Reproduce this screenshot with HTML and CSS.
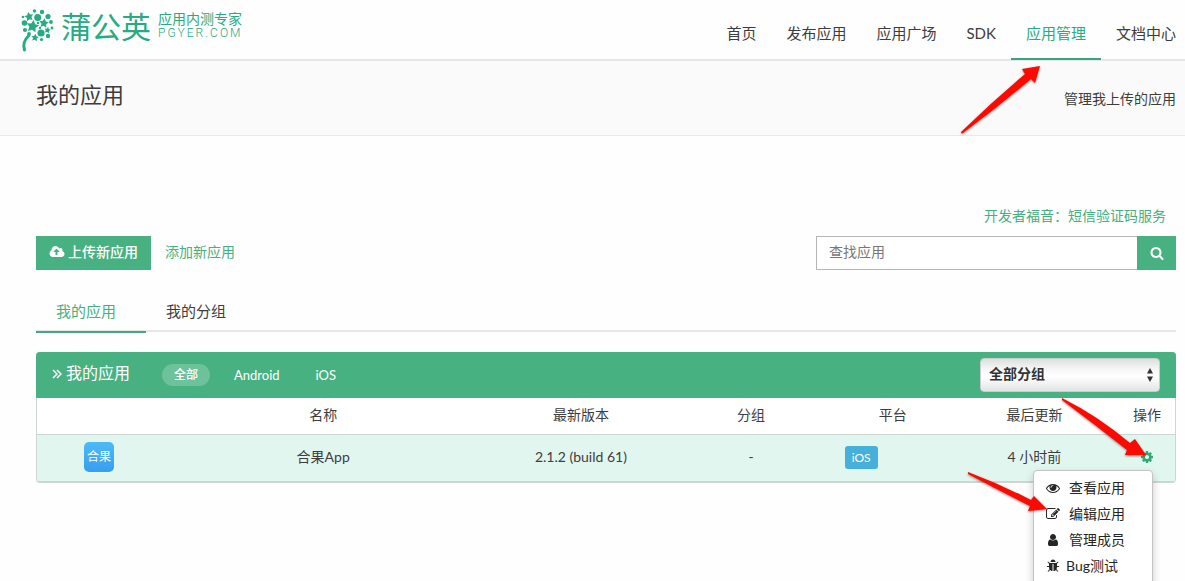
FILE: index.html
```html
<!DOCTYPE html>
<html lang="zh-CN">
<head>
<meta charset="utf-8">
<meta name="viewport" content="width=device-width, initial-scale=1">
<title>我的应用</title>
<link rel="stylesheet" href="styles.css">
</head>
<body>
<div class="page">
  <header class="site-header">
    <a class="brand" href="#">
      <svg class="brand-mark" viewBox="0 0 34 44" aria-hidden="true">
        <defs><path id="star" d="M0-5 1.600-1.800 5-1.400 2.500 1.100 3.100 4.600 0 3-3.100 4.600-2.500 1.100-5-1.400-1.600-1.800z"/></defs>
        <g fill="#27ab82">
          <use href="#star" transform="translate(12.700 18) rotate(10) scale(1.250)"/>
          <use href="#star" transform="translate(9 8.500) rotate(-12) scale(.9)"/>
          <use href="#star" transform="translate(24 15) rotate(8) scale(.95)"/>
          <use href="#star" transform="translate(15 29.500) rotate(8) scale(.75)"/>
          <use href="#star" transform="translate(27.500 22) rotate(12) scale(.65)"/>
          <circle cx="17.700" cy="9.500" r="3.500"/><circle cx="21" cy="25" r="3.600"/>
          <circle cx="28" cy="8.500" r="2.600"/><circle cx="4.500" cy="15" r="2.800"/>
          <circle cx="14.500" cy="3" r="1.700"/><circle cx="22" cy="4" r="2.200"/>
          <circle cx="5" cy="22" r="2.100"/><circle cx="9" cy="26" r="1.900"/>
          <circle cx="31" cy="14" r="1.900"/><circle cx="32" cy="20" r="1.400"/>
          <circle cx="28" cy="28" r="2.200"/>
          <circle cx="21.500" cy="31.500" r="1.600"/><circle cx="3" cy="9" r="1.300"/>
          <circle cx="18" cy="15" r="1.200"/><circle cx="20" cy="20" r="1.200"/>
        </g>
        <path d="M8.500 28Q2 34 4.500 42" fill="none" stroke="#27ab82" stroke-width="3" stroke-linecap="round"/>
      </svg>
      <span class="brand-name">蒲公英</span>
      <span class="brand-tag"><span>应用内测专家</span><span class="brand-domain">PGYER.COM</span></span>
    </a>
    <nav class="main-nav">
      <a href="#">首页</a>
      <a href="#">发布应用</a>
      <a href="#">应用广场</a>
      <a href="#">SDK</a>
      <a class="active" href="#">应用管理</a>
      <a href="#">文档中心</a>
    </nav>
  </header>

  <div class="title-band">
    <h1>我的应用</h1>
    <p>管理我上传的应用</p>
  </div>

  <main>
    <a class="promo" href="#">开发者福音：短信验证码服务</a>
    <div class="toolbar">
      <button class="upload" type="button">
        <svg class="cloud" viewBox="0 0 2048 1792" aria-hidden="true"><path d="M1344 864q0-14-9-23l-352-352q-9-9-23-9t-23 9l-351 351q-10 12-10 24 0 14 9 23t23 9h224v352q0 13 9.500 22.500t22.500 9.500h192q13 0 22.500-9.500t9.500-22.500v-352h224q13 0 22.500-9.500t9.500-22.500zm640 288q0 159-112.500 271.500t-271.500 112.500h-1088q-185 0-316.500-131.500t-131.500-316.500q0-130 70-240t188-165q-2-30-2-43 0-212 150-362t362-150q156 0 285.500 87t188.500 231q71-62 166-62 106 0 181 75t75 181q0 76-41 138 130 31 213.500 135.500t83.500 238.500z"/></svg>
        上传新应用
      </button>
      <a class="add-link" href="#">添加新应用</a>
      <form class="search" role="search">
        <input type="text" placeholder="查找应用" aria-label="查找应用">
        <button type="submit" aria-label="搜索">
          <svg viewBox="0 0 1792 1792" aria-hidden="true"><path d="M1216 832q0-185-131.500-316.500t-316.500-131.500-316.500 131.500-131.500 316.500 131.500 316.500 316.500 131.500 316.500-131.500 131.500-316.500zm512 832q0 52-38 90t-90 38q-54 0-90-38l-343-342q-179 124-399 124-143 0-273.500-55.500t-225-150-150-225-55.500-273.500 55.500-273.500 150-225 225-150 273.500-55.500 273.500 55.500 225 150 150 225 55.500 273.500q0 220-124 399l343 343q37 37 37 90z"/></svg>
        </button>
      </form>
    </div>

    <nav class="tabs">
      <a class="active" href="#">我的应用</a>
      <a href="#">我的分组</a>
    </nav>

    <section class="panel">
      <div class="panel-head">
        <svg class="chevrons" viewBox="0 0 10 10" aria-hidden="true"><path d="M1 1l4 4-4 4M5 1l4 4-4 4"/></svg>
        <h2>我的应用</h2>
        <div class="filters">
          <button class="selected" type="button">全部</button>
          <button type="button">Android</button>
          <button type="button">iOS</button>
        </div>
        <div class="group-select">
          <select aria-label="分组"><option>全部分组</option></select>
          <svg viewBox="0 0 6 14" aria-hidden="true"><path d="M0 5.500 3 0l3 5.500zM0 8.500h6L3 14z"/></svg>
        </div>
      </div>
      <table>
        <colgroup>
          <col class="col-icon"><col class="col-name"><col class="col-version"><col class="col-group"><col class="col-platform"><col class="col-updated"><col>
        </colgroup>
        <thead>
          <tr><th></th><th>名称</th><th>最新版本</th><th>分组</th><th>平台</th><th>最后更新</th><th class="actions">操作</th></tr>
        </thead>
        <tbody>
          <tr>
            <td><span class="app-icon">合果</span></td>
            <td>合果App</td>
            <td>2.1.2 (build 61)</td>
            <td>-</td>
            <td><span class="badge">iOS</span></td>
            <td>4 小时前</td>
            <td class="actions">
              <button class="gear" type="button" aria-label="操作">
                <svg viewBox="0 0 1792 1792" aria-hidden="true"><path d="M1152 896q0-106-75-181t-181-75-181 75-75 181 75 181 181 75 181-75 75-181zm512-109v222q0 12-8 23t-20 13l-185 28q-19 54-39 91 35 50 107 138 10 12 10 25t-9 23q-27 37-99 108t-94 71q-12 0-26-9l-138-108q-44 23-91 38-16 136-29 186-7 28-36 28h-222q-14 0-24.500-8.500t-11.500-21.500l-28-184q-49-16-90-37l-141 107q-10 9-25 9-14 0-25-11-126-114-165-168-7-10-7-23 0-12 8-23 15-21 51-66.500t54-70.500q-27-50-41-99l-183-27q-13-2-21-12.500t-8-23.500v-222q0-12 8-23t19-13l186-28q14-46 39-92-40-57-107-138-10-12-10-24 0-10 9-23 26-36 98.500-107.500t94.500-71.500q13 0 26 10l138 107q44-23 91-38 16-136 29-186 7-28 36-28h222q14 0 24.500 8.500t11.500 21.500l28 184q49 16 90 37l142-107q9-9 24-9 13 0 25 10 129 119 165 170 7 8 7 22 0 12-8 23-15 21-51 66.500t-54 70.500q26 50 41 98l183 28q13 2 21 12.500t8 23.500z"/></svg>
              </button>
              <div class="menu">
                <a href="#"><svg viewBox="0 0 1792 1792" aria-hidden="true"><path d="M1664 960q-152-236-381-353 61 104 61 225 0 185-131.500 316.500t-316.500 131.500-316.500-131.500-131.500-316.500q0-121 61-225-229 117-381 353 133 205 333.500 326.500t434.500 121.500 434.500-121.500 333.500-326.500zm-720-384q0-20-14-34t-34-14q-125 0-214.500 89.500t-89.500 214.500q0 20 14 34t34 14 34-14 14-34q0-86 61-147t147-61q20 0 34-14t14-34zm848 384q0 34-20 69-140 230-376.500 368.500t-499.500 138.500-499.500-139-376.500-368q-20-35-20-69t20-69q140-229 376.500-368t499.500-139 499.500 139 376.500 368q20 35 20 69z"/></svg>查看应用</a>
                <a href="#"><svg viewBox="0 0 1792 1792" aria-hidden="true"><path d="M888 1184l116-116-152-152-116 116v56h96v96h56zm440-720q-16-16-33 1l-350 350q-17 17-1 33t33-1l350-350q17-17 1-33zm80 594v190q0 119-84.500 203.500t-203.500 84.500h-832q-119 0-203.500-84.500t-84.500-203.500v-832q0-119 84.500-203.500t203.500-84.500h832q63 0 117 25 15 7 18 23 3 17-9 29l-49 49q-14 14-32 8-23-6-45-6h-832q-66 0-113 47t-47 113v832q0 66 47 113t113 47h832q66 0 113-47t47-113v-126q0-13 9-22l64-64q15-15 35-7t20 29zm-96-738l288 288-672 672h-288v-288zm444 132l-92 92-288-288 92-92q28-28 68-28t68 28l152 152q28 28 28 68t-28 68z"/></svg>编辑应用</a>
                <a href="#"><svg viewBox="0 0 1792 1792" aria-hidden="true"><path d="M1536 1399q0 109-62.500 187t-150.500 78h-854q-88 0-150.500-78t-62.500-187q0-85 8.500-160.500t31.500-152 58.500-131 94-89 134.500-34.500q131 128 313 128t313-128q76 0 134.500 34.500t94 89 58.500 131 31.500 152 8.500 160.500zm-256-887q0 159-112.500 271.500t-271.500 112.500-271.500-112.500-112.500-271.500 112.500-271.500 271.500-112.500 271.500 112.500 112.500 271.500z"/></svg>管理成员</a>
                <a class="tight" href="#"><svg viewBox="0 0 1792 1792" aria-hidden="true"><path d="M1696 960q0 26-19 45t-45 19h-224q0 171-67 290l208 209q19 19 19 45t-19 45q-18 19-45 19t-45-19l-198-197q-5 5-15 13t-42 28.500-65 36.500-82 29-97 13v-896h-128v896q-51 0-101.500-13.500t-87-33-66-39-43.500-32.500l-15-14-183 207q-20 21-48 21-24 0-43-16-19-18-20.500-44.500t15.500-46.500l202-227q-58-114-58-274h-224q-26 0-45-19t-19-45 19-45 45-19h224v-294l-173-173q-19-19-19-45t19-45 45-19 45 19l173 173h844l173-173q19-19 45-19t45 19 19 45-19 45l-173 173v294h224q26 0 45 19t19 45zm-480-576h-640q0-133 93.500-226.500t226.500-93.500 226.500 93.500 93.500 226.500z"/></svg>Bug测试</a>
              </div>
            </td>
          </tr>
        </tbody>
      </table>
    </section>
  </main>

  <svg class="pointers" viewBox="0 0 225 520" aria-hidden="true">
    <path d="M1 132Q32 102 65 74L62 69 80 66 75 83 71 79Q38 107 3 133Q1 134 1 132z"/>
    <path d="M102 398Q138 416 170 443L175 439 186 455 165 455 167 450Q134 424 102 400z"/>
    <path d="M8 472Q40 484 71 500L74 496 87 509 68 511 70 506Q38 490 8 474z"/>
  </svg>
</div>
</body>
</html>
```

FILE: styles.css
```css
* {
  box-sizing: border-box;
}

body {
  margin: 0;
  color: #3d3d3d;
  background: #fefefe;
  font: 14px/20px Lato, "Noto Sans CJK SC", sans-serif;
}

a {
  color: inherit;
  text-decoration: none;
}

button,
input,
select {
  font: inherit;
}

button {
  border: 0;
  padding: 0;
  background: none;
  cursor: pointer;
}

h1,
h2,
p {
  margin: 0;
  font-weight: 400;
}

svg {
  display: block;
  fill: currentColor;
  flex: none;
}

.page {
  position: relative;
  min-height: 100vh;
  overflow: hidden;
}

.site-header {
  display: flex;
  justify-content: space-between;
  height: 61px;
  padding: 0 9px 0 20px;
  border-bottom: 2px solid #e6e6e6;
}

.brand {
  display: flex;
  align-items: center;
  height: 52px;
  color: #27ab82;
}

.brand-mark {
  width: 34px;
  height: 44px;
  margin: 8px 7px 0 0;
}

.brand-name {
  font-size: 30px;
  line-height: 44px;
}

.brand-tag {
  display: flex;
  flex-direction: column;
  margin-left: 7px;
  font-size: 14px;
  line-height: 15px;
}

.brand-domain {
  font-family: Roboto, sans-serif;
  font-size: 12px;
  font-weight: 300;
  letter-spacing: 2px;
}

.main-nav {
  display: flex;
  font-size: 15px;
}

.main-nav a {
  height: 60px;
  padding: 0 15px;
  line-height: 67px;
  white-space: nowrap;
}

.main-nav a:last-child {
  padding-right: 0;
}

.main-nav .active {
  color: #27ab82;
  border-bottom: 2px solid #36a67c;
}

.title-band {
  display: flex;
  align-items: center;
  justify-content: space-between;
  height: 75px;
  padding: 0 9px 6px 36px;
  background: #fafafa;
  border-bottom: 1px solid #e9e9e9;
}

.title-band h1 {
  font-size: 22px;
  line-height: 32px;
}

.title-band p {
  padding-top: 8px;
}

main {
  padding: 70px 9px 0 36px;
}

.promo {
  display: block;
  width: max-content;
  margin: 0 10px 10px auto;
  color: #45b080;
}

.toolbar {
  display: flex;
  height: 34px;
}

.upload {
  display: flex;
  align-items: center;
  gap: 3px;
  padding: 0 13px 2px;
  color: #fff;
  background: #48b182;
  font-weight: 500;
}

.cloud {
  width: 16px;
  height: 14px;
}

.add-link {
  margin-left: 14px;
  color: #45b080;
  line-height: 32px;
}

.search {
  display: flex;
  width: 360px;
  margin-left: auto;
}

.search input {
  flex: 1;
  min-width: 0;
  padding: 0 12px 2px;
  border: 1px solid #b5b5b5;
  border-right: 0;
  background: #fff;
}

.search input::placeholder {
  color: #777;
}

.search button {
  display: grid;
  place-items: center;
  width: 39px;
  color: #fff;
  background: #48b182;
}

.search svg {
  width: 14px;
  height: 14px;
}

.tabs {
  display: flex;
  height: 42px;
  margin: 20px 0;
  border-bottom: 2px solid #e6e6e6;
  font-size: 15px;
  line-height: 43px;
}

.tabs a {
  height: 43px;
  padding: 0 30px 0 20px;
}

.tabs .active {
  color: #45b080;
  border-bottom: 2px solid #45a680;
}

.panel {
  border: 1px solid #ccd6d2;
  border-bottom-width: 2px;
  border-radius: 4px;
}

.panel-head {
  display: flex;
  align-items: center;
  height: 46px;
  margin: -1px -1px 0;
  padding: 0 16px;
  color: #fff;
  background: #48b182;
  border-radius: 4px 4px 0 0;
}

.chevrons {
  width: 10px;
  height: 10px;
  margin-bottom: 2px;
  fill: none;
  stroke: currentColor;
  stroke-width: 1.5;
}

.panel-head h2 {
  margin: 0 32px 4px 4px;
  font-size: 16px;
}

.filters {
  display: flex;
  gap: 12px;
}

.filters button {
  height: 22px;
  padding: 0 12px;
  color: inherit;
  border-radius: 11px;
  font-size: 13px;
  line-height: 22px;
}

.filters .selected {
  background: #6dc29c;
  font-size: 12px;
  font-weight: 500;
}

.group-select {
  position: relative;
  width: 180px;
  margin-left: auto;
}

.group-select select {
  display: block;
  width: 100%;
  height: 34px;
  padding: 0 24px 2px 8px;
  appearance: none;
  color: #333;
  background: linear-gradient(#dedede, #f5f5f5 30%, #fff 55%, #e4e4e4);
  border: 1px solid #ccc;
  border-radius: 4px;
  font-weight: 700;
}

.group-select svg {
  position: absolute;
  top: 10px;
  right: 7px;
  width: 6px;
  height: 14px;
  color: #333;
  pointer-events: none;
}

table {
  width: 100%;
  table-layout: fixed;
  border-collapse: collapse;
  text-align: center;
}

th,
td {
  padding: 0;
  font-weight: 400;
}

th {
  height: 36px;
  padding-bottom: 2px;
  background: #fff;
}

td {
  height: 47px;
  padding-bottom: 1px;
  background: #e1f6ee;
  border-top: 1px solid #ccd6d2;
}

.col-icon { width: 10.9%; }
.col-name { width: 28.5%; }
.col-version { width: 16.8%; }
.col-group { width: 13.1%; }
.col-platform { width: 11.8%; }
.col-updated { width: 13.1%; }

.app-icon {
  display: block;
  width: 30px;
  height: 30px;
  margin: 0 auto;
  color: #fff;
  background: linear-gradient(#4dbaf8, #389eee);
  border-radius: 5px;
  font-size: 12px;
  line-height: 29px;
}

.badge {
  display: block;
  width: 33px;
  margin-left: 19px;
  color: #fff;
  background: #46b0da;
  border-radius: 3px;
  font-size: 12px;
  line-height: 23px;
}

.actions {
  position: relative;
  padding-left: 10px;
}

.gear {
  display: block;
  margin: 0 auto;
  color: #36a875;
}

.gear svg,
.menu svg {
  width: 14px;
  height: 14px;
}

.menu {
  position: absolute;
  z-index: 1;
  top: 35px;
  right: 22px;
  width: 120px;
  padding: 4px 0 6px;
  color: #262626;
  background: #fff;
  border: 1px solid #c4c4c4;
  border-radius: 4px;
  box-shadow: 0 4px 8px rgba(0, 0, 0, 0.2);
}

.menu a {
  display: flex;
  align-items: center;
  gap: 9px;
  height: 26px;
  padding-left: 12px;
}

.menu .tight {
  gap: 6px;
}

.pointers {
  position: absolute;
  z-index: 2;
  top: 0;
  right: 0;
  width: 225px;
  height: 520px;
  fill: #fa0a00;
  filter: drop-shadow(0 1px 1px rgba(60, 0, 0, 0.5));
  pointer-events: none;
}
```
